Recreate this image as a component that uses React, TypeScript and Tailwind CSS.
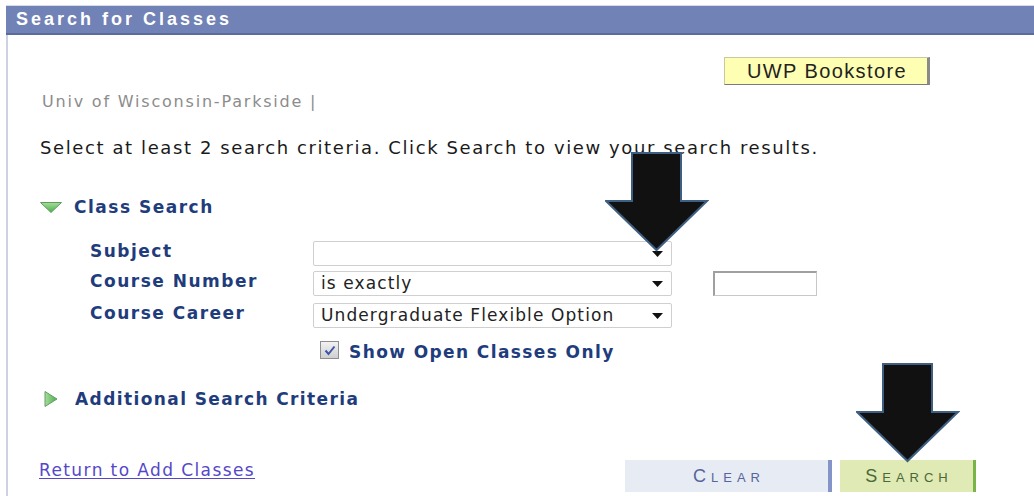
import React from "react";

type Field = {
  label: string;
  value: string;
};

const fields: Field[] = [
  { label: "Subject", value: "" },
  { label: "Course Number", value: "is exactly" },
  { label: "Course Career", value: "Undergraduate Flexible Option" },
];

function DropArrow() {
  return (
    <svg width="11" height="6" viewBox="0 0 11 6" className="shrink-0">
      <path d="M0 0 H11 L5.5 6 Z" fill="#111" />
    </svg>
  );
}

function SelectBox({ value }: { value: string }) {
  return (
    <div className="flex h-[25px] w-[359px] items-center justify-between rounded-[2px] border border-[#cfcfcf] bg-white pl-[7px] pr-[8px] text-[17px] leading-none tracking-[1.1px] text-[#222]">
      <span>{value}</span>
      <DropArrow />
    </div>
  );
}

function BigArrow({ className }: { className: string }) {
  return (
    <svg
      width="104"
      height="100"
      viewBox="0 0 104 100"
      className={"pointer-events-none absolute " + className}
    >
      <path
        d="M27 1 H76 V49 H102 L51.5 98 L1 49 H27 Z"
        fill="#111"
        stroke="#3f5f82"
        strokeWidth="2"
        strokeLinejoin="miter"
      />
    </svg>
  );
}

export default function App() {
  return (
    <div className="relative h-[496px] w-[1034px] overflow-hidden bg-white font-['DejaVu_Sans',sans-serif]">
      {/* page title bar */}
      <div className="ml-[6px] mt-[5px] flex h-[30px] items-center border-t border-b-2 border-t-[#d8dbe6] border-b-[#5c6a9c] bg-[#7182b6] pl-[10px]">
        <span className="font-['Liberation_Sans',sans-serif] text-[18px] font-bold tracking-[3px] text-white">
          Search for Classes
        </span>
      </div>

      <div className="ml-[6px] flex h-[461px] flex-col border-l-2 border-[#ccd2e4]">
        <div className="mt-[22px] flex justify-end pr-[104px]">
          <button className="h-[28px] w-[206px] border border-[#c9c9a0] border-b-[#7a7a7a] border-r-[3px] border-r-[#8a8a8a] bg-[#ffffb3] pl-[2px] font-['Liberation_Sans',sans-serif] text-[20px] leading-none tracking-[1.4px] text-[#222]">
            UWP Bookstore
          </button>
        </div>

        <div className="ml-[34px] mt-[8px] text-[16px] leading-[18px] tracking-[1.8px] text-[#8c8c8c]">
          Univ of Wisconsin-Parkside |
        </div>

        <div className="ml-[32px] mt-[26px] text-[18px] leading-[22px] tracking-[1.6px] text-[#1a1a1a]">
          Select at least 2 search criteria. Click Search to view your search results.
        </div>

        {/* class search section */}
        <div className="ml-[32px] mt-[38px] flex items-center gap-[12px]">
          <svg width="22" height="11" viewBox="0 0 22 11">
            <defs>
              <linearGradient id="gdown" x1="0" y1="0" x2="0" y2="1">
                <stop offset="0" stopColor="#a6dd9a" />
                <stop offset="1" stopColor="#4aae4a" />
              </linearGradient>
            </defs>
            <path d="M0.5 0.5 H21.5 L11 10.5 Z" fill="url(#gdown)" stroke="#5c9c5c" strokeWidth="1" />
          </svg>
          <span className="text-[17px] font-bold leading-[20px] tracking-[1.5px] text-[#1f3c7c]">Class Search</span>
        </div>

        <div className="ml-[82px] mt-[24px] flex flex-col gap-[5px]">
          {fields.map((f, i) => (
            <div key={f.label} className={"flex h-[25px] items-center " + (i === 2 ? "mt-[2px]" : "")}>
              <span className="-mt-[5px] w-[223px] text-[17px] font-bold leading-[21px] tracking-[1.5px] text-[#1f3c7c]">{f.label}</span>
              <SelectBox value={f.value} />
              {i === 1 && (
                <div className="ml-[41px] h-[25px] w-[104px] border border-[#c8c8c8] border-l-2 border-t-2 border-l-[#a0a0a0] border-t-[#a0a0a0] bg-white" />
              )}
            </div>
          ))}
        </div>

        <div className="ml-[312px] mt-[12px] flex h-[20px] items-center gap-[10px]">
          <div className="flex h-[18px] w-[19px] items-center justify-center border border-[#8e8e8e] bg-gradient-to-b from-[#f2f2f2] to-[#cfcfcf]">
            <svg width="12" height="11" viewBox="0 0 12 11">
              <path d="M1.5 5.5 L4.5 9 L10.5 1.5" fill="none" stroke="#3d56a6" strokeWidth="2" />
            </svg>
          </div>
          <span className="mt-[4px] text-[17px] font-bold leading-[20px] tracking-[1.4px] text-[#1f3c7c]">Show Open Classes Only</span>
        </div>

        {/* collapsed section */}
        <div className="ml-[36px] mt-[29px] flex h-[20px] items-center gap-[17px]">
          <svg width="14" height="16" viewBox="0 0 14 16">
            <defs>
              <linearGradient id="gright" x1="0" y1="0" x2="1" y2="0">
                <stop offset="0" stopColor="#a6dd9a" />
                <stop offset="1" stopColor="#4aae4a" />
              </linearGradient>
            </defs>
            <path d="M1 0.5 L13 8 L1 15.5 Z" fill="url(#gright)" stroke="#6a9a6a" strokeWidth="1" />
          </svg>
          <span className="text-[17px] font-bold leading-[20px] tracking-[1.4px] text-[#1f3c7c]">Additional Search Criteria</span>
        </div>

        <div className="mt-[51px] flex items-start">
          <a className="ml-[31px] text-[17px] leading-[20px] tracking-[1.4px] text-[#5548c8] underline underline-offset-[2px]" href="#">
            Return to Add Classes
          </a>
          <div className="ml-auto mr-[58px] flex gap-[8px]">
            <button className="h-[32px] w-[207px] border-r-[4px] border-[#8494c8] bg-[#e6ebf4] pl-[5px] font-['Liberation_Sans',sans-serif] text-[18px] tracking-[5px] text-[#56659a] [font-variant:small-caps]">
              Clear
            </button>
            <button className="h-[32px] w-[136px] border-r-[3px] border-[#78b448] bg-[#dfeab5] pl-[5px] font-['Liberation_Sans',sans-serif] text-[18px] tracking-[5px] text-[#4a6838] [font-variant:small-caps]">
              Search
            </button>
          </div>
        </div>
      </div>

      <BigArrow className="left-[605px] top-[152px]" />
      <BigArrow className="left-[856px] top-[363px]" />
    </div>
  );
}
